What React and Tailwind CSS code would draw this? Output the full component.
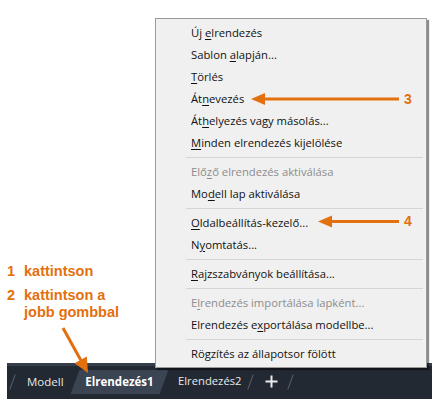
import React from "react";

const F = { fontFamily: '"Open Sans", "Noto Sans", sans-serif' };

function Item({ children, disabled }) {
  return (
    <div
      className={`h-[22px] flex items-center pl-[35px] text-[11.25px] ${disabled ? "text-[#8d8d8d]" : "text-[#111]"}`}
    >
      <span className="whitespace-nowrap">{children}</span>
    </div>
  );
}

function Sep() {
  return (
    <div className="h-[7px] flex items-center ml-[30px] mr-[3px]">
      <div className="h-px w-full bg-[#d5d5d5]" />
    </div>
  );
}

const U = ({ children }) => <u className="underline underline-offset-[2px] decoration-[1px]">{children}</u>;

function Slash() {
  return <div className="w-px h-[16px] bg-[#555d6a] rotate-[20deg] shrink-0" />;
}

export default function App() {
  return (
    <div className="relative w-[443px] h-[414px] bg-white overflow-hidden" style={F}>
      {/* Tab bar */}
      <div className="pt-[363px] pl-[7px]">
        <div className="w-[425px] h-[36px] bg-[#222933] border-t-[3px] border-[#363e4b] flex items-center pb-[2px]">
          <div className="ml-[5px]"><Slash /></div>
          <div className="ml-[14px] w-[48px] text-[11.5px] text-[#e8e8e8]">Modell</div>
          <div className="relative w-[89px] h-[24px] shrink-0 flex items-center justify-center">
            <div className="absolute inset-0 bg-[#3b4453] -skew-x-[20deg]" />
            <span className="relative text-[11.5px] font-bold text-white">Elrendezés1</span>
          </div>
          <div className="ml-[14px] w-[66px] text-[11.25px] text-[#e8e8e8] whitespace-nowrap">Elrendezés2</div>
          <div className="ml-[6px]"><Slash /></div>
          <div className="ml-[14px] w-[13px] h-[13px] shrink-0">
            <svg width="13" height="13" viewBox="0 0 13 13">
              <path d="M6.5 0.5V12.5M0.5 6.5H12.5" stroke="#eaeaea" strokeWidth="2" />
            </svg>
          </div>
          <div className="ml-[12px]"><Slash /></div>
        </div>
      </div>

      {/* Context menu */}
      <div className="absolute left-[155px] top-[18px] w-[272px] bg-[#f0f0f0] border border-[#9a9a9a] shadow-[2px_2px_1px_rgba(0,0,0,0.45)] pt-[3px] pb-[2px]">
        <Item>Új <U>e</U>lrendezés</Item>
        <Item>Sablon <U>a</U>lapján...</Item>
        <Item><U>T</U>örlés</Item>
        <Item>Át<U>n</U>evezés</Item>
        <Item>Át<U>h</U>elyezés vagy másolás...</Item>
        <Item><U>M</U>inden elrendezés kijelölése</Item>
        <Sep />
        <Item disabled>Elő<U>z</U>ő elrendezés aktiválása</Item>
        <Item>Mo<U>d</U>ell lap aktiválása</Item>
        <Sep />
        <Item><U>O</U>ldalbeállítás-kezelő...</Item>
        <Item>N<U>y</U>omtatás...</Item>
        <Sep />
        <Item><U>R</U>ajzszabványok beállítása...</Item>
        <Sep />
        <Item disabled>E<U>l</U>rendezés importálása lapként...</Item>
        <Item>Elrendezés e<U>x</U>portálása modellbe...</Item>
        <Sep />
        <Item>Rögzítés az állapotsor fölött</Item>
      </div>

      {/* Arrows overlay */}
      <svg className="absolute inset-0 pointer-events-none" width="443" height="414" viewBox="0 0 443 414">
        <g fill="#e3700e" stroke="none">
          <rect x="262" y="97.5" width="137" height="3" />
          <polygon points="251,99 265,93 265,105" />
          <rect x="329" y="220" width="70" height="3" />
          <polygon points="318,221.5 332,215.5 332,227.5" />
          <polygon points="74.6,363.3 86.8,356.5 88,373" />
        </g>
        <line x1="63" y1="328" x2="81" y2="360.5" stroke="#e3700e" strokeWidth="3" />
      </svg>

      {/* Annotation texts */}
      <div className="absolute left-[404px] top-[90px] text-[14px] font-bold text-[#e3700e] leading-[18px]" style={{ fontFamily: '"Liberation Sans", Arial, sans-serif' }}>3</div>
      <div className="absolute left-[404px] top-[212px] text-[14px] font-bold text-[#e3700e] leading-[18px]" style={{ fontFamily: '"Liberation Sans", Arial, sans-serif' }}>4</div>
      <div className="absolute left-[7px] top-[263px] text-[14.5px] font-bold text-[#e3700e] leading-[17px]" style={{ fontFamily: '"Liberation Sans", Arial, sans-serif' }}>
        <div className="flex"><span className="w-[17px]">1</span><span>kattintson</span></div>
        <div className="flex mt-[7px]"><span className="w-[17px]">2</span><span>kattintson a<br />jobb gombbal</span></div>
      </div>
    </div>
  );
}
